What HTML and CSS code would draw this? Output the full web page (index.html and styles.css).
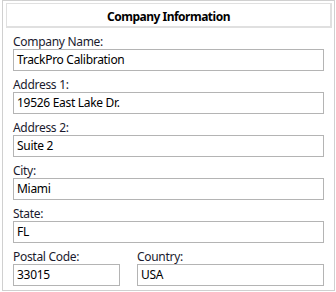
FILE: index.html
```html
<!DOCTYPE html>
<html>
<head>
<meta charset="utf-8">
<link rel="stylesheet" href="styles.css">
</head>
<body>
<div class="panel">
  <div class="header">Company Information</div>
  <div class="form">
    <div class="field">
      <div class="label">Company Name:</div>
      <div class="input">TrackPro Calibration</div>
    </div>
    <div class="field">
      <div class="label">Address 1:</div>
      <div class="input">19526 East Lake Dr.</div>
    </div>
    <div class="field">
      <div class="label">Address 2:</div>
      <div class="input">Suite 2</div>
    </div>
    <div class="field">
      <div class="label">City:</div>
      <div class="input">Miami</div>
    </div>
    <div class="field">
      <div class="label">State:</div>
      <div class="input">FL</div>
    </div>
    <div class="row">
      <div class="field postal">
        <div class="label">Postal Code:</div>
        <div class="input">33015</div>
      </div>
      <div class="field country">
        <div class="label">Country:</div>
        <div class="input">USA</div>
      </div>
    </div>
  </div>
</div>
</body>
</html>
```
FILE: styles.css
```css
html, body {
  margin: 0;
  padding: 0;
  background: #fff;
}
body {
  font-family: "Noto Sans", "Open Sans", sans-serif;
  font-size: 12px;
  letter-spacing: -0.3px;
  color: #000;
}
.panel {
  margin-left: 2px;
  border: 1px solid #d0d0d0;
  padding: 2px 0 0 3px;
  box-sizing: border-box;
  width: 333px;
  height: 291px;
}
.header {
  width: 326px;
  height: 25px;
  box-sizing: border-box;
  border: 2px solid #e0e0e0;
  border-left-width: 1px;
  border-top-width: 1px;
  text-align: center;
  font-weight: bold;
  letter-spacing: -0.5px;
  padding-top: 4px;
  line-height: 18px;
  font-size: 12px;
}
.form {
  display: flex;
  flex-direction: column;
  padding: 0 0 0 7px;
}
.field {
  display: flex;
  flex-direction: column;
}
.label {
  height: 21px;
  line-height: 15px;
  padding-top: 6px;
  box-sizing: border-box;
  color: #1a1a2e;
}
.input {
  width: 311px;
  height: 22px;
  box-sizing: border-box;
  border: 1px solid #b4b4b4;
  padding-left: 3px;
  line-height: 20px;
}
.row {
  display: flex;
  gap: 17px;
}
.postal .input { width: 107px; }
.country .input { width: 187px; }
```
